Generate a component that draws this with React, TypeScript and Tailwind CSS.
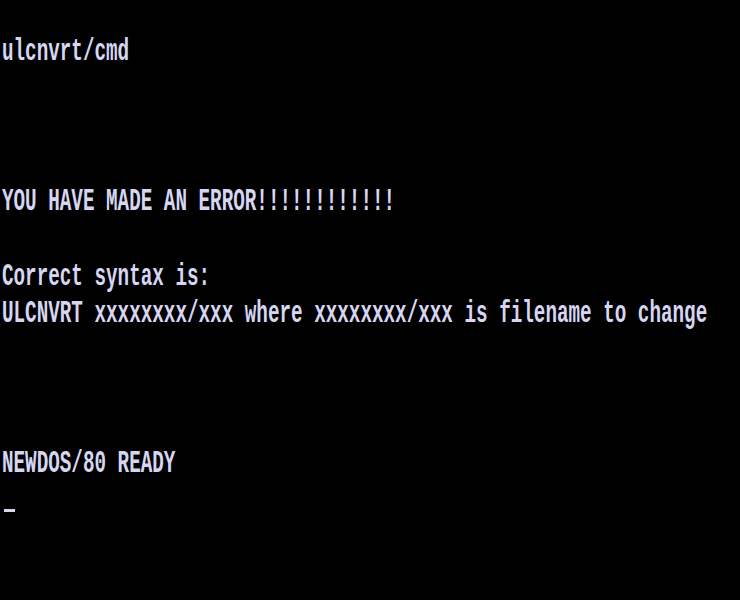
import React from "react";

const lines: string[] = [
  "",
  "ulcnvrt/cmd",
  "",
  "",
  "",
  "YOU HAVE MADE AN ERROR!!!!!!!!!!!!",
  "",
  "Correct syntax is:",
  "ULCNVRT xxxxxxxx/xxx where xxxxxxxx/xxx is filename to change",
  "",
  "",
  "",
  "NEWDOS/80 READY",
  "",
  "",
  "",
];

export default function App() {
  return (
    <div className="w-[740px] h-[600px] bg-black overflow-hidden text-[#d6d6f2]">
      {lines.map((l, i) => (
        <div key={i} className="h-[37.5px] pl-[2px] flex items-start">
          {i === 13 ? (
            <div className="mt-[21px] ml-[2px] w-[11px] h-[3px] bg-[#d6d6f2]" />
          ) : (
            <div
              className="-translate-y-[1.5px] origin-top-left scale-y-[1.65] whitespace-pre font-bold text-[19.27px] leading-none"
              style={{ fontFamily: '"Liberation Mono", "DejaVu Sans Mono", monospace' }}
            >
              {l}
            </div>
          )}
        </div>
      ))}
    </div>
  );
}
